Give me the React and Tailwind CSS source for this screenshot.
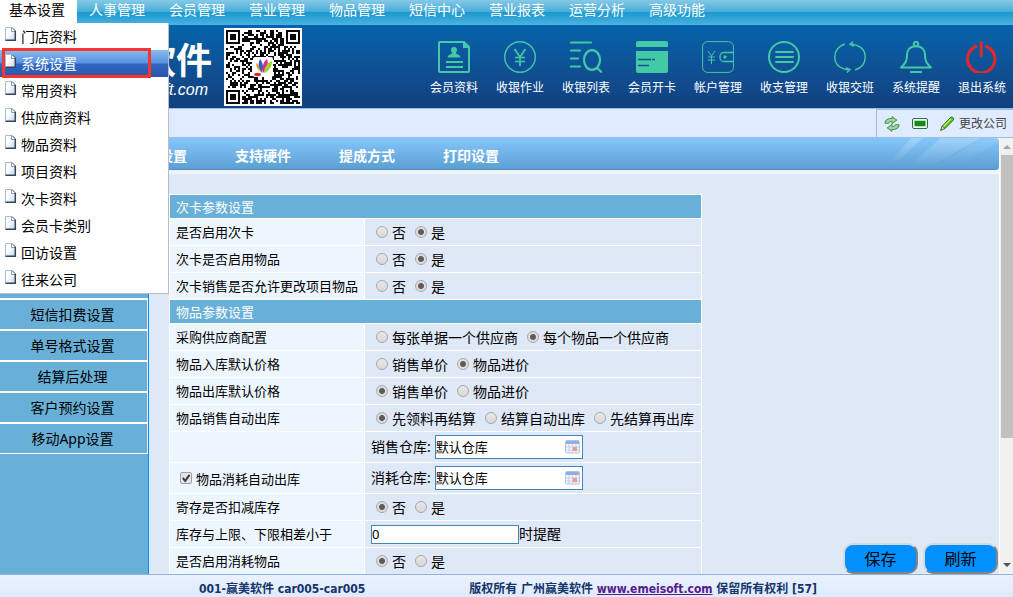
import React from "react";

const MENU = ["人事管理", "会员管理", "营业管理", "物品管理", "短信中心", "营业报表", "运营分析", "高级功能"];

const DROPDOWN = [
  "门店资料", "系统设置", "常用资料", "供应商资料", "物品资料",
  "项目资料", "次卡资料", "会员卡类别", "回访设置", "往来公司",
];

const SIDE = ["短信扣费设置", "单号格式设置", "结算后处理", "客户预约设置", "移动App设置"];

const TABS = ["参数设置", "支持硬件", "提成方式", "打印设置"];

function PageIcon() {
  return (
    <svg width="12" height="15" viewBox="0 0 12 15" aria-hidden="true">
      <defs>
        <linearGradient id="sheet" x1="0" y1="0" x2="1" y2="1">
          <stop offset=".4" stopColor="#fff" />
          <stop offset="1" stopColor="#c3cfe0" />
        </linearGradient>
      </defs>
      <path d="M.5 13.500V.5H7L10.500 4v9.500z" fill="url(#sheet)" />
      <path d="M.5 13.500V.5H7" fill="none" stroke="#a9bbdb" />
      <path d="M6.500.5v4h4z" fill="#fff" />
      <path d="M6.500 1v3.500H10" fill="none" stroke="#8b9cb5" />
      <path d="M7 .5L10.500 4" stroke="#3d5068" />
      <path d="M10.300 4v9.300H.5" fill="none" stroke="#33465f" strokeWidth="1.500" />
    </svg>
  );
}

const G = "#43c9a6";

const ACTIONS = [
  {
    label: "会员资料",
    icon: (
      <>
        <path d="M26 1H2a1 1 0 0 0-1 1v28a1 1 0 0 0 1 1h28a1 1 0 0 0 1-1V6z" fill="none" stroke={G} strokeWidth="2" />
        <path d="M25 0v7h7z" fill={G} />
        <path d="M16 6c2 0 3 1.300 3 3 0 1.500-.8 2.400-1.200 3 .2 1.500 4.200 1.200 4.700 4.500h-13c.5-3.300 4.500-3 4.700-4.500-.4-.6-1.200-1.500-1.200-3 0-1.700 1-3 3-3z" fill={G} />
        <path d="M8 21h17M8 26h17" stroke={G} strokeWidth="2" />
      </>
    ),
  },
  {
    label: "收银作业",
    icon: (
      <g fill="none" stroke={G}>
        <circle cx="16" cy="16" r="15.300" strokeWidth="1.400" />
        <path d="M10.500 8l5.500 8 5.500-8M16 16v9M11 16.500h10M11 20.500h10" strokeWidth="1.700" />
      </g>
    ),
  },
  {
    label: "收银列表",
    icon: (
      <g fill="none" stroke={G} strokeWidth="2.200" strokeLinecap="round">
        <path d="M1 1.500h20M1 9.500h9M1 17.500h7M1 25.500h9" />
        <ellipse cx="22" cy="19" rx="8" ry="9.800" />
        <path d="M27 27l4.500 4" />
      </g>
    ),
  },
  {
    label: "会员开卡",
    icon: (
      <>
        <path d="M2 0h28a2 2 0 0 1 2 2v4H0V2a2 2 0 0 1 2-2zM0 10h32v20a2 2 0 0 1-2 2H2a2 2 0 0 1-2-2z" fill={G} />
        <path d="M2 18.500h13M16 18.500h3M2 24.500h11" stroke="#0b5299" strokeWidth="1.600" />
      </>
    ),
  },
  {
    label: "帐户管理",
    icon: (
      <g fill="none" stroke={G}>
        <rect x=".6" y=".6" width="30.800" height="30.800" rx="5" />
        <path d="M6 10l3.500 5 3.500-5M9.500 15v8M6 16h7M6 19h7" />
        <path d="M31.500 11.500H22a4 4 0 0 0-4 4v1a4 4 0 0 0 4 4h9.500" strokeWidth="1.300" />
        <circle cx="23" cy="16" r="1.200" fill={G} />
      </g>
    ),
  },
  {
    label: "收支管理",
    icon: (
      <g fill="none" stroke={G} strokeWidth="2" strokeLinecap="round">
        <circle cx="16" cy="16" r="15" />
        <path d="M8 11h17M8 16h17M8 21h17" />
      </g>
    ),
  },
  {
    label: "收银交班",
    icon: (
      <g fill="none" stroke={G} strokeWidth="1.400">
        <path d="M11 3C4.500 5 .8 10 .8 16c0 7 5 12 15.200 13M13 31.500l3-2.800-4-2" />
        <path d="M21 29c6.500-2 10.200-7 10.200-13 0-7-5-12-15.200-13M19 .5l-3 2.800 4 2" />
      </g>
    ),
  },
  {
    label: "系统提醒",
    icon: (
      <g fill="none" stroke={G} strokeWidth="2" strokeLinejoin="round">
        <circle cx="16" cy="3" r="2.200" />
        <path d="M16 5.200C10 5.200 7 9 7 14c0 6-1.500 8.500-6 12.500h30c-4.500-4-6-6.500-6-12.500 0-5-3-8.800-9-8.800z" />
        <path d="M10 31h12" />
      </g>
    ),
  },
  {
    label: "退出系统",
    icon: (
      <g fill="none" stroke="#e2282c" strokeWidth="3" strokeLinecap="round">
        <path d="M9.800 5.500A13.700 13.700 0 1 0 20.600 5.500" />
        <path d="M15.200 1.500v13" />
      </g>
    ),
  },
];

const QR_SIZE = 37;

function inFinder(x, y) {
  const spots = [[0, 0], [QR_SIZE - 7, 0], [0, QR_SIZE - 7]];
  for (const [fx, fy] of spots) {
    const dx = x - fx;
    const dy = y - fy;
    if (dx >= -1 && dx <= 7 && dy >= -1 && dy <= 7) {
      const ring = Math.max(Math.abs(dx - 3), Math.abs(dy - 3));
      return ring === 3 || ring <= 1 ? 1 : 0;
    }
  }
  const ring = Math.max(Math.abs(x - 30), Math.abs(y - 30));
  if (ring <= 2) return ring === 1 ? 0 : 1;
  return -1;
}

function qrPath() {
  let seed = 4217;
  let d = "";
  for (let y = 0; y < QR_SIZE; y++) {
    for (let x = 0; x < QR_SIZE; x++) {
      seed = (seed * 1103515245 + 12345) % 2147483648;
      const fixed = inFinder(x, y);
      const on = fixed >= 0 ? fixed === 1 : seed / 2147483648 > 0.47;
      if (on) d += `M${x} ${y}h1v1h-1z`;
    }
  }
  return d;
}

function QrCode() {
  return (
    <svg width="78" height="78" viewBox="0 0 78 78" role="img" aria-label="QR" className="shrink-0">
      <rect width="78" height="78" fill="#fff" />
      <path d={qrPath()} transform="translate(2 2) scale(2)" fill="#0a0a0a" shapeRendering="crispEdges" />
      <rect x="29" y="29" width="20" height="20" rx="2" fill="#fff" />
      <ellipse cx="33.500" cy="46.500" rx="3.500" ry="1.700" fill="#e5252d" />
      <path d="M37 44c-4-3-5.500-6-4.500-9 3 2 5 5 4.500 9z" fill="#f3a01c" />
      <path d="M38 45c-4-6-4-10-2-14 3 4 4 8 2 14z" fill="#2b62c9" />
      <path d="M39 45c-1-6 0-11 4-14 2 5 0 10-4 14z" fill="#e3298c" />
      <path d="M40 45c0-5 3-10 8-12 0 6-3 10-8 12z" fill="#a5cf2c" />
    </svg>
  );
}

function RefreshIcon() {
  return (
    <svg width="16" height="16" viewBox="0 0 16 16" aria-hidden="true">
      <g fill="#9ad694" stroke="#3f8045" strokeWidth=".9" strokeLinejoin="round">
        <path d="M1 7.200C1 3.800 3.800 2.200 8 2.500V.6l4.800 3.500L8 7.700V5.600C5.800 5.500 5 6 4.800 7.200z" />
        <path d="M15 8.800c0 3.400-2.800 5-7 4.700v1.900L3.200 11.900 8 8.300v2.100c2.200.1 3-.4 3.200-1.600z" />
      </g>
    </svg>
  );
}

function ScreenIcon() {
  return (
    <svg width="16" height="11" viewBox="0 0 16 11" aria-hidden="true">
      <rect x=".5" y=".5" width="15" height="10" rx="1.500" fill="#f8fff8" stroke="#2f6b4c" />
      <rect x="2" y="2.500" width="12" height="6" fill="#7fc47f" />
      <rect x="3" y="3" width="10" height="5" fill="#128a18" />
    </svg>
  );
}

function PencilIcon() {
  return (
    <svg width="15" height="15" viewBox="0 0 15 15" aria-hidden="true">
      <path d="M.8 14.200L2.300 10 10.800 1.200c1.500-.8 3.500 1 2.700 2.700L5 12.500z" fill="#5cc31f" stroke="#2c6e17" />
      <path d="M3.500 10.500L11 2.800" stroke="#c4f08c" strokeWidth="1.200" />
      <path d="M.8 14.200l1.500-4.200L5 12.500z" fill="#f1e3b5" stroke="#35551f" strokeWidth=".7" />
    </svg>
  );
}

function CalendarIcon() {
  return (
    <svg width="15" height="14" viewBox="0 0 15 14" aria-hidden="true">
      <rect x=".5" y=".5" width="14" height="12.500" rx="1" fill="#f3f6fc" stroke="#b5c5e0" />
      <path d="M1 1h13v3H1z" fill="#92addf" />
      <path d="M1 7h13M1 10h13M4 4v9M7.500 4v9M11 4v9" stroke="#c3d0e6" />
      <rect x="8" y="7" width="4" height="4" fill="#ef9a8a" />
    </svg>
  );
}

function Radio({ name, label, checked }) {
  return (
    <label className="flex items-center gap-1">
      <input
        type="radio"
        name={name}
        defaultChecked={checked}
        className="size-3 appearance-none rounded-full border border-[#a9a9a9] bg-[#dddddd] bg-linear-to-b from-[#e8e8e8] to-[#d8d8d8] checked:bg-[radial-gradient(circle,#5c5c5c_0,#5c5c5c_2.5px,#dedede_3.5px)]"
      />
      <span className="pt-px">{label}</span>
    </label>
  );
}

function RadioRow({ label, name, options, value }) {
  return (
    <tr>
      <th scope="row" className={LABEL}>{label}</th>
      <td className={`${VALUE} h-[26px] pl-[11px]`}>
        <div className="flex items-center gap-[9px]">
          {options.map((o, i) => (
            <Radio key={o} name={name} label={o} checked={i === value} />
          ))}
        </div>
      </td>
    </tr>
  );
}

const LABEL = "bg-[#edf5ff] p-0 pl-1.5 text-left text-[13px] font-normal leading-5";
const VALUE = "bg-[#dfe8f6] p-0 text-sm";

function SectionRow({ children }) {
  return (
    <tr>
      <th colSpan={2} className="h-[23px] bg-[#69b0d8] p-0 pl-1.5 text-left text-[13px] leading-5 font-normal text-white">
        {children}
      </th>
    </tr>
  );
}

function StoreField({ id, label }) {
  return (
    <div className="flex items-center gap-1">
      <label htmlFor={id} className="whitespace-nowrap">{label}</label>
      <div className="flex h-6 w-[148px] items-center border border-[#4086b8] bg-white pr-0.5">
        <input id={id} defaultValue="默认仓库" className="min-w-0 flex-1 text-[13px] outline-none" />
        <button type="button" aria-label={label}>
          <CalendarIcon />
        </button>
      </div>
    </div>
  );
}

function SettingsTable() {
  const yesNo = ["否", "是"];
  return (
    <table className="w-[533px] table-fixed border-separate border-spacing-px bg-white">
      <colgroup>
        <col className="w-[194px]" />
        <col />
      </colgroup>
      <tbody>
        <SectionRow>次卡参数设置</SectionRow>
        <RadioRow label="是否启用次卡" name="card" options={yesNo} value={1} />
        <RadioRow label="次卡是否启用物品" name="cardGoods" options={yesNo} value={1} />
        <RadioRow label="次卡销售是否允许更改项目物品" name="cardEdit" options={yesNo} value={1} />
        <SectionRow>物品参数设置</SectionRow>
        <RadioRow label="采购供应商配置" name="supplier" options={["每张单据一个供应商", "每个物品一个供应商"]} value={1} />
        <RadioRow label="物品入库默认价格" name="inPrice" options={["销售单价", "物品进价"]} value={1} />
        <RadioRow label="物品出库默认价格" name="outPrice" options={["销售单价", "物品进价"]} value={0} />
        <RadioRow label="物品销售自动出库" name="autoOut" options={["先领料再结算", "结算自动出库", "先结算再出库"]} value={0} />
        <tr>
          <th className={LABEL} />
          <td className={`${VALUE} h-[30px] pl-1.5`}>
            <StoreField id="saleStore" label="销售仓库:" />
          </td>
        </tr>
        <tr>
          <th scope="row" className={LABEL}>
            <label className="flex items-center gap-1 pl-1">
              <input type="checkbox" defaultChecked className="peer sr-only" />
              <svg width="12" height="12" viewBox="0 0 12 12" aria-hidden="true" className="group peer-checked:[&_path]:visible [&_path]:invisible">
                <rect x=".5" y=".5" width="11" height="11" rx="1.500" fill="#e4e4e4" stroke="#a0a0a0" />
                <path d="M2.800 6l2.400 2.800L9.500 2.800" fill="none" stroke="#3c3c3c" strokeWidth="2" />
              </svg>
              <span className="pt-px">物品消耗自动出库</span>
            </label>
          </th>
          <td className={`${VALUE} h-[30px] pl-1.5`}>
            <StoreField id="useStore" label="消耗仓库:" />
          </td>
        </tr>
        <RadioRow label="寄存是否扣减库存" name="deposit" options={yesNo} value={0} />
        <tr>
          <th scope="row" className={LABEL}>
            <label htmlFor="limit">库存与上限、下限相差小于</label>
          </th>
          <td className={`${VALUE} h-[26px] pl-1.5`}>
            <div className="flex items-center">
              <input id="limit" defaultValue="0" className="h-[19px] w-[148px] border border-[#4086b8] bg-white text-[13px] outline-none" />
              <span>时提醒</span>
            </div>
          </td>
        </tr>
        <RadioRow label="是否启用消耗物品" name="consume" options={yesNo} value={0} />
      </tbody>
    </table>
  );
}

function TopMenu() {
  return (
    <nav className="relative z-20 flex h-[25px] shrink-0 bg-[linear-gradient(#86c9e6_0,#45add9_12px,#1997d0_12px,#4ab3de_25px)] text-sm leading-5 text-white">
      <button type="button" className="h-[23px] w-[77px] bg-white pb-[3px] pl-[9px] text-left text-black">基本设置</button>
      {MENU.map((m) => (
        <button type="button" key={m} className="h-[23px] w-20 pb-[3px] pl-3 text-left">{m}</button>
      ))}
      <ul className="absolute top-[23px] left-0 w-[169px] border-r border-b border-[#b9bcc2] bg-white text-black">
        {DROPDOWN.map((d, i) => (
          <li key={d} className="relative">
            <a
              href="#"
              className={
                i === 1
                  ? "flex h-[27px] items-start gap-1 bg-[linear-gradient(#8abcf0_0,#5791e0_13px,#2f66c0_14px,#2d56a6_27px)] pl-[5px] text-white"
                  : "flex h-[27px] items-start gap-1 pl-[5px]"
              }
            >
              <span className="pt-1"><PageIcon /></span>
              <span className="pt-1">{d}</span>
            </a>
            {i === 1 && <span className="pointer-events-none absolute -top-0.5 left-0.5 h-[30px] w-[149px] border-3 border-[#f8352f]" />}
          </li>
        ))}
      </ul>
    </nav>
  );
}

function Banner() {
  return (
    <header className="flex h-[83px] shrink-0 items-start justify-between bg-linear-to-b from-[#0563ab] to-[#12407f] pr-[7px] text-white">
      <div className="flex items-start gap-3 pt-[3px]">
        <div className="w-[212px] pt-3 text-right whitespace-nowrap">
          <div className="text-4xl leading-[42px] font-bold">软件</div>
          <div className="pr-1 font-[Liberation_Sans] text-base leading-4 italic">emeisoft.com</div>
        </div>
        <QrCode />
      </div>
      <div className="flex gap-[18px] pt-4">
        {ACTIONS.map((a) => (
          <a href="#" key={a.label} className="flex w-12 flex-col items-center gap-1.5 text-xs leading-[18px] whitespace-nowrap">
            <svg width="32" height="32" viewBox="0 0 32 32" aria-hidden="true">{a.icon}</svg>
            {a.label}
          </a>
        ))}
      </div>
    </header>
  );
}

function Toolbar() {
  return (
    <div className="flex h-[30px] shrink-0 justify-end border-y border-[#9ebce6] bg-[#dfebff]">
      <div className="flex w-[137px] items-center border-t border-l border-[#9ebce6] pl-[7px] text-xs text-[#444]">
        <button type="button" aria-label="刷新" className="mr-3"><RefreshIcon /></button>
        <button type="button" aria-label="窗口" className="mr-3"><ScreenIcon /></button>
        <a href="#" className="flex items-center gap-1 whitespace-nowrap"><PencilIcon />更改公司</a>
      </div>
    </div>
  );
}

function TabBar() {
  return (
    <div className="shrink-0 border-b-4 border-[#eef4fb]">
      <div className="flex h-8 items-stretch justify-between overflow-hidden rounded-r-sm border-b border-[#4e90c4] bg-linear-to-b from-[#86c7fa] to-[#5b9fd3]">
        <div className="flex items-center gap-12 pt-1 pl-[131px] text-sm font-bold text-white">
          {TABS.map((t) => (
            <button type="button" key={t}>{t}</button>
          ))}
        </div>
        <svg width="112" height="32" viewBox="0 0 112 32" aria-hidden="true">
          <defs>
            <linearGradient id="glare" x1="0" y1="0" x2="0" y2="1">
              <stop offset="0" stopColor="#fff" stopOpacity=".22" />
              <stop offset="1" stopColor="#fff" stopOpacity="0" />
            </linearGradient>
          </defs>
          <path d="M24 0h12L8 26H2z" fill="url(#glare)" />
          <path d="M54 0h40L40 30H20z" fill="url(#glare)" />
          <path d="M96 0h16v4L66 30H46z" fill="url(#glare)" opacity=".4" />
        </svg>
      </div>
    </div>
  );
}

function ScrollTrack() {
  return (
    <div className="flex w-3.5 shrink-0 flex-col items-center overflow-hidden border-l border-white bg-[#f1f1f1]">
      <svg width="13" height="17" viewBox="0 0 13 17" aria-hidden="true" className="shrink-0">
        <path d="M3 11l4-4 4 4z" fill="#a3a3a3" />
      </svg>
      <div className="ml-px h-[65%] w-3 bg-[#c1c1c1]" />
      <svg width="13" height="17" viewBox="0 0 13 17" aria-hidden="true" className="mt-auto shrink-0">
        <path d="M3 6l4 4 4-4z" fill="#505050" />
      </svg>
    </div>
  );
}

const BUTTON = "h-[31px] w-[75px] rounded-[10px] border-2 border-t-[#d9d9d9] border-r-[#858585] border-b-[#858585] border-l-[#d9d9d9] bg-[#0090ff] text-base leading-none text-black";

export default function App() {
  return (
    <div className="flex h-screen flex-col overflow-hidden bg-[#dfe8f6] font-['Noto_Sans','Noto_Sans_CJK_SC',sans-serif] text-black">
      <TopMenu />
      <Banner />
      <Toolbar />
      <div className="flex min-h-0 flex-1">
        <div className="relative flex min-w-0 flex-1 flex-col">
          <TabBar />
          <div className="flex min-h-0 flex-1">
            <aside className="w-[149px] shrink-0 border-r border-[#0090ff] bg-[#69b0d8] pt-[124px]">
              <ul className="border-b border-white text-center text-sm leading-[29px]">
                {SIDE.map((s) => (
                  <li key={s} className="border-t-2 border-r border-t-white border-r-[#dfe8f6]">
                    <a href="#" className="block pr-0.5">{s}</a>
                  </li>
                ))}
              </ul>
            </aside>
            <main className="min-w-0 flex-1 overflow-hidden pt-5 pl-5">
              <SettingsTable />
            </main>
          </div>
          <div className="absolute right-px bottom-0 flex gap-[5px]">
            <button type="button" className={BUTTON}>保存</button>
            <button type="button" className={BUTTON}>刷新</button>
          </div>
        </div>
        <ScrollTrack />
      </div>
      <footer className="flex h-[23px] shrink-0 gap-[104px] border-t border-[#8fb3e2] bg-linear-to-b from-[#eaf1fd] to-[#deebfd] pt-1 pl-[199px] font-['DejaVu_Sans_Condensed','Noto_Sans_CJK_SC',sans-serif] text-xs leading-5 font-bold whitespace-nowrap text-[#15346b]">
        <span>001-赢美软件 car005-car005</span>
        <span>
          版权所有 广州赢美软件 <a href="#" className="text-[#551a8b] underline">www.emeisoft.com</a> 保留所有权利 [57]
        </span>
      </footer>
    </div>
  );
}
